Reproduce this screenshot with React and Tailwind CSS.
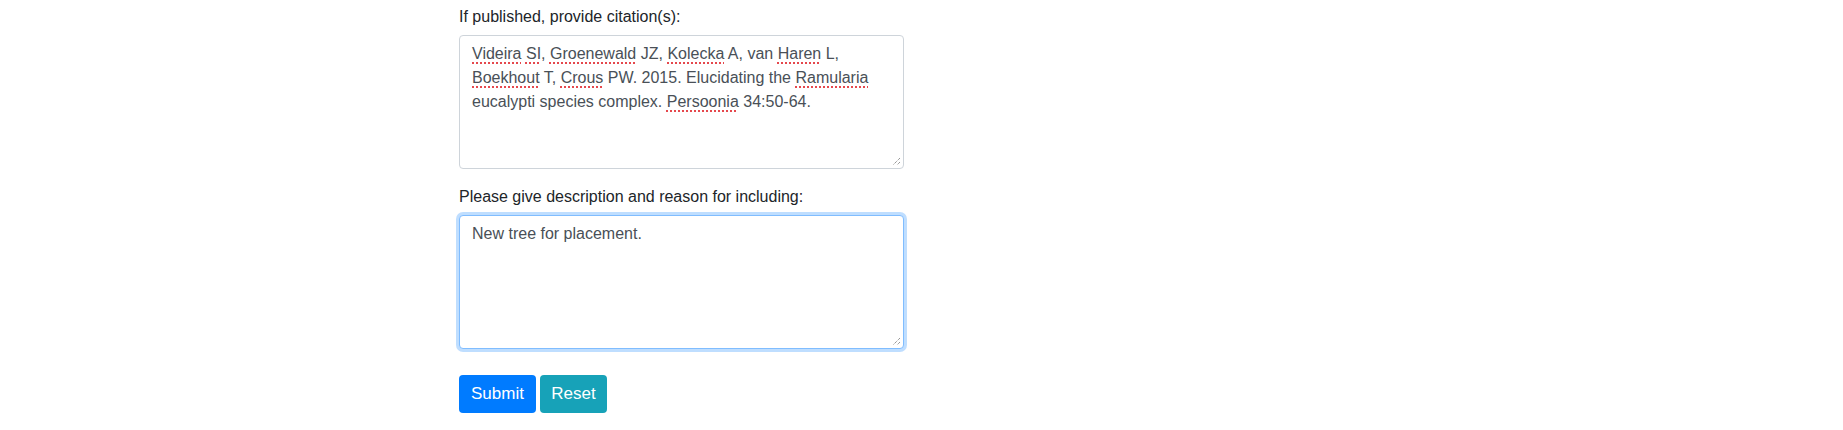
const font = { fontFamily: '"Liberation Sans", Arial, sans-serif' };

function Sp({ children }) {
  return (
    <span className="underline decoration-dotted decoration-[#e5484d] decoration-2 underline-offset-[3px]">
      {children}
    </span>
  );
}

function Grip() {
  return (
    <svg
      className="absolute right-[2px] bottom-[2px]"
      width="9"
      height="9"
      viewBox="0 0 9 9"
    >
      <path d="M8 1L1 8M8 5L5 8" stroke="#6b6b6b" strokeWidth="1" strokeDasharray="1 1" />
    </svg>
  );
}

function Box({ focused, children }) {
  return (
    <div
      className={
        "relative h-[134px] w-full rounded-[4px] border bg-white px-3 py-[6px] text-base leading-6 text-[#495057] " +
        (focused
          ? "border-[#80bdff] shadow-[0_0_0_3px_rgba(0,123,255,0.25)]"
          : "border-[#ced4da]")
      }
    >
      {children}
      <Grip />
    </div>
  );
}

export default function App() {
  return (
    <div className="min-h-[430px] bg-white text-[#212529]" style={font}>
      <form className="ml-[459px] w-[445px] pt-[5px]">
        <div className="mb-4">
          <label className="mb-[6px] block text-base leading-6">
            If published, provide citation(s):
          </label>
          <Box>
            <Sp>Videira</Sp> <Sp>SI</Sp>, <Sp>Groenewald</Sp> JZ, <Sp>Kolecka</Sp> A, van{" "}
            <Sp>Haren</Sp> L, <Sp>Boekhout</Sp> T, <Sp>Crous</Sp> PW. 2015. Elucidating the{" "}
            <Sp>Ramularia</Sp> eucalypti species complex. <Sp>Persoonia</Sp> 34:50-64.
          </Box>
        </div>
        <div className="mb-[26px]">
          <label className="mb-[6px] block text-base leading-6">
            Please give description and reason for including:
          </label>
          <Box focused>New tree for placement.</Box>
        </div>
        <div className="flex gap-[4px]">
          <button
            type="button"
            className="h-[38px] w-[77px] rounded-[4px] bg-[#007bff] text-[17px] text-white"
          >
            Submit
          </button>
          <button
            type="button"
            className="h-[38px] w-[67px] rounded-[4px] bg-[#17a2b8] text-[17px] text-white"
          >
            Reset
          </button>
        </div>
      </form>
    </div>
  );
}
